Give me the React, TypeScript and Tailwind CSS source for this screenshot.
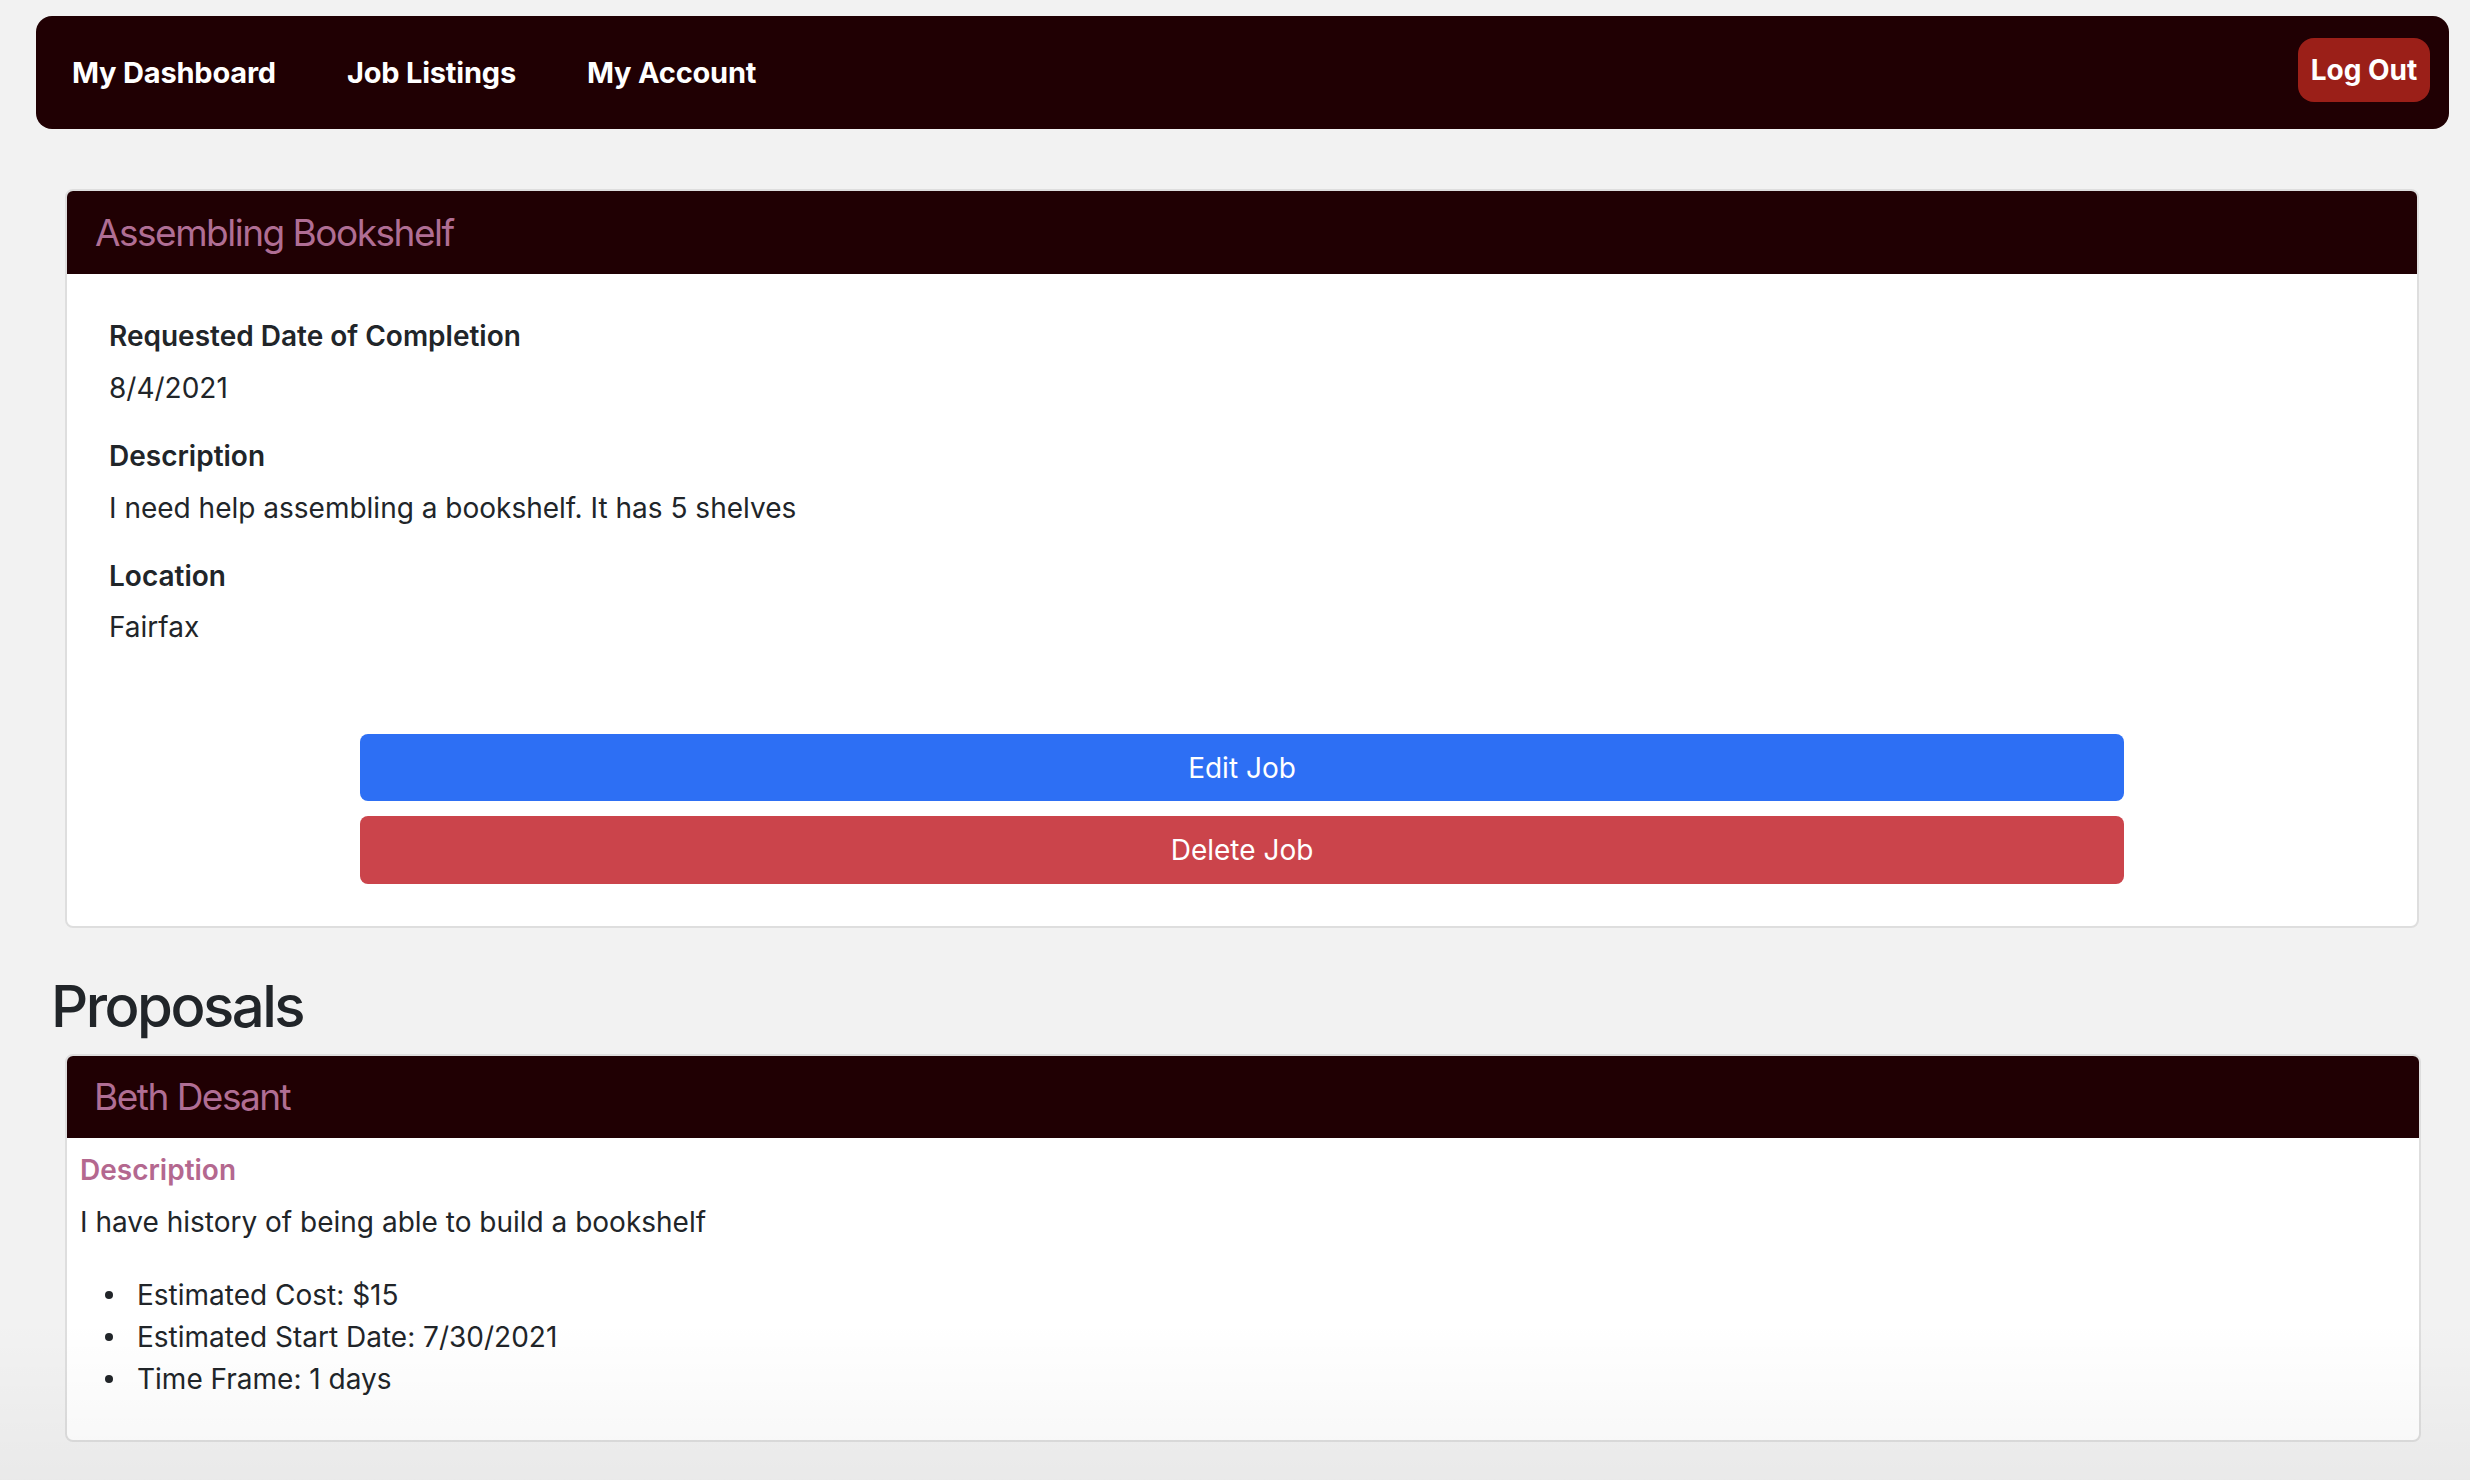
import React from "react";

export default function App() {
  const font = { fontFamily: "Inter, 'Noto Sans', sans-serif" };
  const items = ["Estimated Cost: $15", "Estimated Start Date: 7/30/2021", "Time Frame: 1 days"];
  return (
    <div className="relative min-h-screen bg-[#f2f2f2] pt-[16px] pb-[38px] text-[#212529]" style={font}>
      <nav className="ml-[36px] mr-[21px] flex h-[113px] items-center justify-between rounded-[16px] bg-[#200003] pl-[36px] pr-[19px]">
        <div className="flex items-center gap-[71px] text-[29px] font-bold tracking-[-0.2px] text-white">
          <a>My Dashboard</a>
          <a>Job Listings</a>
          <a>My Account</a>
        </div>
        <button className="mb-[5px] flex h-[64px] w-[132px] items-center justify-center rounded-[16px] bg-[#9b1f18] text-[28px] font-bold text-white">
          Log Out
        </button>
      </nav>

      <section className="ml-[65px] mr-[51px] mt-[60px] overflow-hidden rounded-[8px] border-2 border-[#dedede] bg-white">
        <div className="flex h-[83px] items-center bg-[#200003] pl-[28px] text-[37px] tracking-[-1.5px] text-[#b06e94]">
          Assembling Bookshelf
        </div>
        <div className="px-[42px] pt-[41px] pb-[42px] text-[28px] leading-[42px]">
          <div className="flex flex-col gap-[26px]">
            <div>
              <div className="mb-[10px] font-semibold">Requested Date of Completion</div>
              <div>8/4/2021</div>
            </div>
            <div>
              <div className="mb-[10px] font-semibold">Description</div>
              <div>I need help assembling a bookshelf. It has 5 shelves</div>
            </div>
            <div>
              <div className="mb-[9px] font-semibold">Location</div>
              <div>Fairfax</div>
            </div>
          </div>
          <div className="mx-auto mt-[86px] flex w-[1764px] flex-col gap-[15px]">
            <button className="h-[67px] w-full rounded-[8px] bg-[#2d6ff4] text-[28px] text-white">Edit Job</button>
            <button className="h-[68px] w-full rounded-[8px] bg-[#cb444b] text-[28px] text-white">Delete Job</button>
          </div>
        </div>
      </section>

      <h2 className="ml-[51px] mt-[43px] mb-[13px] text-[58px] font-medium leading-[70px] tracking-[-2.5px]">Proposals</h2>

      <section className="ml-[65px] mr-[49px] overflow-hidden rounded-[8px] border-2 border-[#dedede] bg-white">
        <div className="flex h-[82px] items-center bg-[#200003] pl-[27px] text-[37px] tracking-[-1.5px] text-[#b06e94]">
          Beth Desant
        </div>
        <div className="px-[13px] pt-[11px] pb-[40px] text-[28px] leading-[42px]">
          <div className="mb-[10px] font-semibold text-[#b4688f]">Description</div>
          <div>I have history of being able to build a bookshelf</div>
          <ul className="mt-[31px] pl-[25px]">
            {items.map((t) => (
              <li key={t} className="flex items-center gap-[24px]">
                <span className="h-[8px] w-[8px] shrink-0 rounded-full bg-[#212529]" />
                <span>{t}</span>
              </li>
            ))}
          </ul>
        </div>
      </section>

      <div className="pointer-events-none absolute bottom-0 left-0 right-0 h-[160px] bg-gradient-to-b from-transparent to-[rgba(0,0,0,0.035)]" />
    </div>
  );
}
